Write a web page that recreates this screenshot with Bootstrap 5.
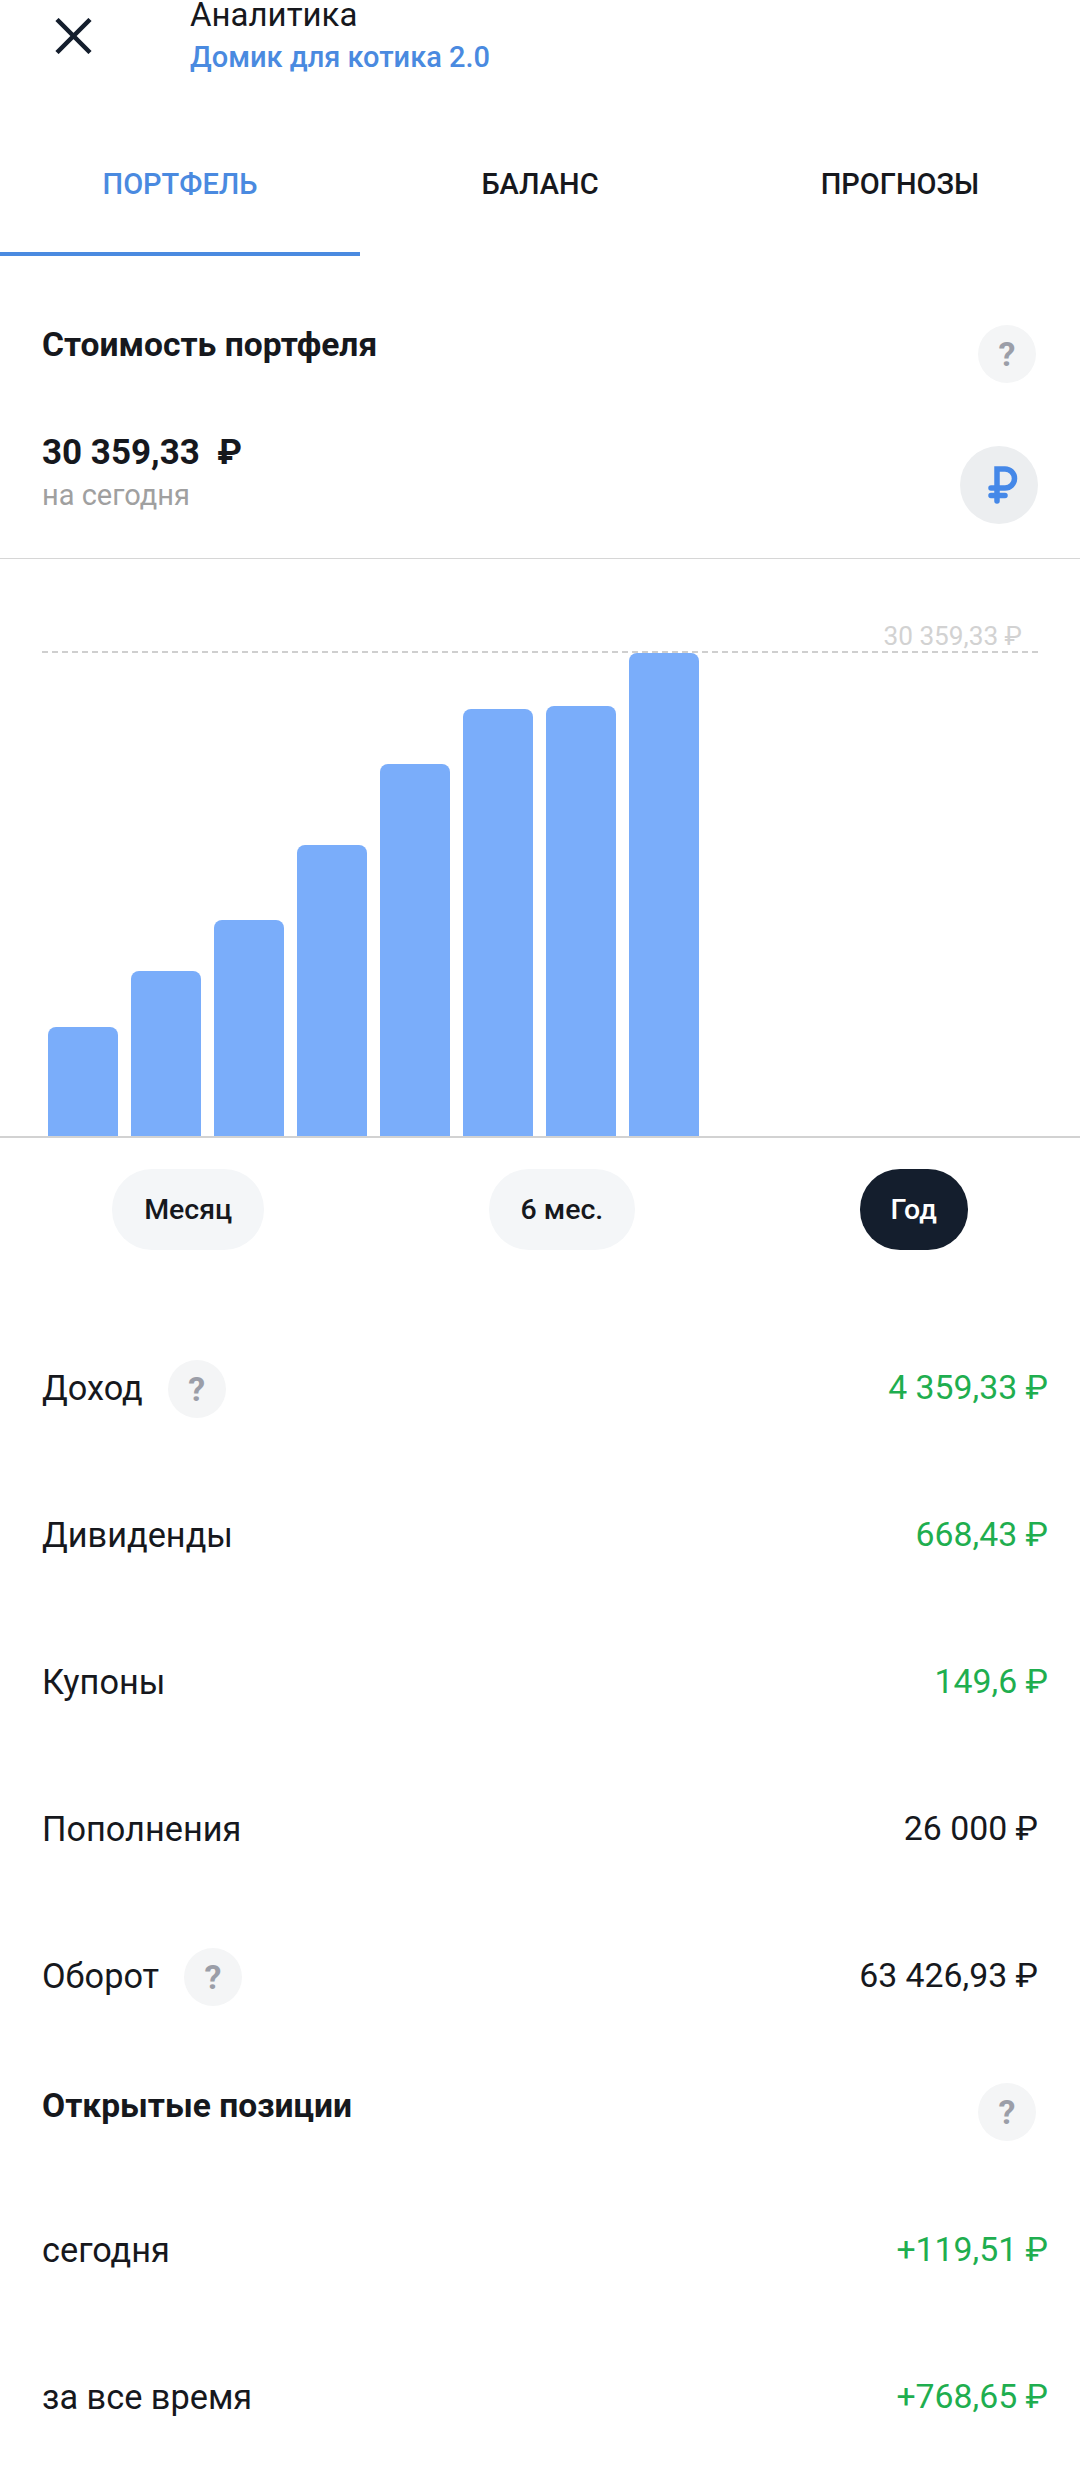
<!DOCTYPE html>
<html lang="ru">
<head>
    <meta charset="UTF-8">
    <meta name="viewport" content="width=device-width, initial-scale=1.0">
    <title>Аналитика</title>
    <link href="https://cdn.jsdelivr.net/npm/bootstrap@5.3.0/dist/css/bootstrap.min.css" rel="stylesheet">
    <style>
        body {
            font-family: Roboto, "Liberation Sans", sans-serif;
            color: #16181d;
            background: #fff;
        }
        .app-screen { width: 1080px; height: 2468px; overflow: hidden; }

        /* шапка */
        .top-head { height: 92px; }
        .close-box { width: 190px; padding: 18px 0 0 55px; }
        .head-title { font-size: 33px; line-height: 30px; }
        .head-sub { font-size: 29px; line-height: 36px; margin-top: 9px; color: #4a8ae0; font-weight: 500; }

        /* вкладки */
        .tab-bar .nav-link {
            width: 360px;
            height: 164px;
            padding: 72px 0 0;
            font-size: 29px;
            line-height: 40px;
            color: #16181d;
            text-align: center;
            font-weight: 500;
            border-bottom: 4px solid transparent;
        }
        .tab-bar .nav-link.active { color: #4a8ae0; border-bottom-color: #4a8ae0; }

        /* стоимость */
        .value-block { height: 303px; padding: 0 42px 0 42px; border-bottom: 1px solid #d6d6d6; }
        .block-title { font-size: 33.6px; line-height: 40px; font-weight: 700; }
        .head-row { height: 127px; padding-right: 2px; }
        .head-row .block-title { margin-bottom: 18px; }
        .help-dot {
            width: 58px;
            height: 58px;
            border-radius: 50%;
            background: #f4f5f6;
            color: #9b9ea8;
            font-size: 34px;
            font-weight: 700;
            line-height: 1;
        }
        .total-row { padding-top: 50px; }
        .total-sum { font-size: 35px; line-height: 40px; font-weight: 700; }
        .total-note { font-size: 29px; line-height: 34px; color: #a0a0a0; margin-top: 5px; }
        .cur-dot { width: 78px; height: 78px; margin-top: 13px; border-radius: 50%; background: #eceef0; }
        .cur-dot svg { margin-left: 7px; }

        /* график */
        .chart-box { height: 579px; padding-left: 48px; border-bottom: 2px solid #d2d2d2; gap: 13px; }
        .chart-bar { width: 70px; background: #7aadfa; border-radius: 8px 8px 0 0; }
        .peak-line { position: absolute; left: 42px; right: 42px; top: 92px; border-top: 2px dashed #cfcfcf; }
        .peak-label { position: absolute; right: 16px; top: -32px; font-size: 26.2px; line-height: 30px; color: #d2d2d2; }

        /* периоды */
        .period-row { padding-top: 31px; margin-bottom: 65px; }
        .period-btn {
            height: 81px;
            padding: 2px 32px 0;
            border: 0;
            border-radius: 40px;
            background: #f4f6f8;
            color: #16181d;
            font-size: 28.5px;
            font-weight: 500;
        }
        .period-btn.is-on { background: #141e2d; color: #fff; padding: 2px 31px 0; }

        /* строки */
        .stat-row { height: 147px; padding-left: 42px; padding-right: 32px; font-size: 34.3px; }
        .stat-row .help-dot { margin-left: 25px; }
        .stat-sum { font-size: 33.8px; }
        .sum-plain { margin-right: 10px; }
        .sum-green { color: #1fae4f; }
        .positions-head { height: 127px; padding: 0 44px 0 42px; }
        .positions-head .block-title { margin-bottom: 16px; }
        .positions-head .help-dot { margin-bottom: 4px; }
    </style>
</head>
<body>
    <div class="app-screen position-relative">
        <header class="top-head d-flex">
            <div class="close-box">
                <svg width="37" height="36" viewBox="0 0 37 36" fill="none" stroke="#141e2d" stroke-width="4.5">
                    <path d="M2 1.5 35 34.5M35 1.5 2 34.5"/>
                </svg>
            </div>
            <div>
                <div class="head-title">Аналитика</div>
                <div class="head-sub">Домик для котика 2.0</div>
            </div>
        </header>

        <nav class="nav tab-bar">
            <a class="nav-link active" href="#">ПОРТФЕЛЬ</a>
            <a class="nav-link" href="#">БАЛАНС</a>
            <a class="nav-link" href="#">ПРОГНОЗЫ</a>
        </nav>

        <section class="value-block">
            <div class="head-row d-flex justify-content-between align-items-end">
                <div class="block-title">Стоимость портфеля</div>
                <div class="help-dot d-flex align-items-center justify-content-center">?</div>
            </div>
            <div class="total-row d-flex justify-content-between align-items-start">
                <div>
                    <div class="total-sum">30 359,33&nbsp; ₽</div>
                    <div class="total-note">на сегодня</div>
                </div>
                <div class="cur-dot d-flex align-items-center justify-content-center">
                    <svg width="30" height="38" viewBox="0 0 30 38" fill="none" stroke="#4588e8" stroke-width="5.5" stroke-linecap="round">
                        <path d="M9 35V3h8a9.5 9.5 0 0 1 0 19H3M3 29.500h14"/>
                    </svg>
                </div>
            </div>
        </section>

        <section class="position-relative">
            <div class="chart-box d-flex align-items-end">
                <div class="chart-bar" style="height:109px"></div>
                <div class="chart-bar" style="height:165px"></div>
                <div class="chart-bar" style="height:216px"></div>
                <div class="chart-bar" style="height:291px"></div>
                <div class="chart-bar" style="height:372px"></div>
                <div class="chart-bar" style="height:427px"></div>
                <div class="chart-bar" style="height:430px"></div>
                <div class="chart-bar" style="height:483px"></div>
            </div>
            <div class="peak-line">
                <span class="peak-label">30 359,33 ₽</span>
            </div>
        </section>

        <div class="period-row d-flex justify-content-around">
            <button class="period-btn" type="button">Месяц</button>
            <button class="period-btn" type="button">6 мес.</button>
            <button class="period-btn is-on" type="button">Год</button>
        </div>

        <div class="stat-row d-flex justify-content-between align-items-center">
            <div class="d-flex align-items-center">Доход <span class="help-dot d-flex align-items-center justify-content-center">?</span></div>
            <div class="stat-sum sum-green">4 359,33 ₽</div>
        </div>
        <div class="stat-row d-flex justify-content-between align-items-center">
            <div>Дивиденды</div>
            <div class="stat-sum sum-green">668,43 ₽</div>
        </div>
        <div class="stat-row d-flex justify-content-between align-items-center">
            <div>Купоны</div>
            <div class="stat-sum sum-green">149,6 ₽</div>
        </div>
        <div class="stat-row d-flex justify-content-between align-items-center">
            <div>Пополнения</div>
            <div class="stat-sum sum-plain">26 000 ₽</div>
        </div>
        <div class="stat-row d-flex justify-content-between align-items-center">
            <div class="d-flex align-items-center">Оборот <span class="help-dot d-flex align-items-center justify-content-center">?</span></div>
            <div class="stat-sum sum-plain">63 426,93 ₽</div>
        </div>

        <div class="positions-head d-flex justify-content-between align-items-center">
            <div class="block-title">Открытые позиции</div>
            <div class="help-dot d-flex align-items-center justify-content-center">?</div>
        </div>

        <div class="stat-row d-flex justify-content-between align-items-center">
            <div>сегодня</div>
            <div class="stat-sum sum-green">+119,51 ₽</div>
        </div>
        <div class="stat-row d-flex justify-content-between align-items-center">
            <div>за все время</div>
            <div class="stat-sum sum-green">+768,65 ₽</div>
        </div>
    </div>

    <script src="https://cdn.jsdelivr.net/npm/bootstrap@5.3.0/dist/js/bootstrap.bundle.min.js"></script>
</body>
</html>
